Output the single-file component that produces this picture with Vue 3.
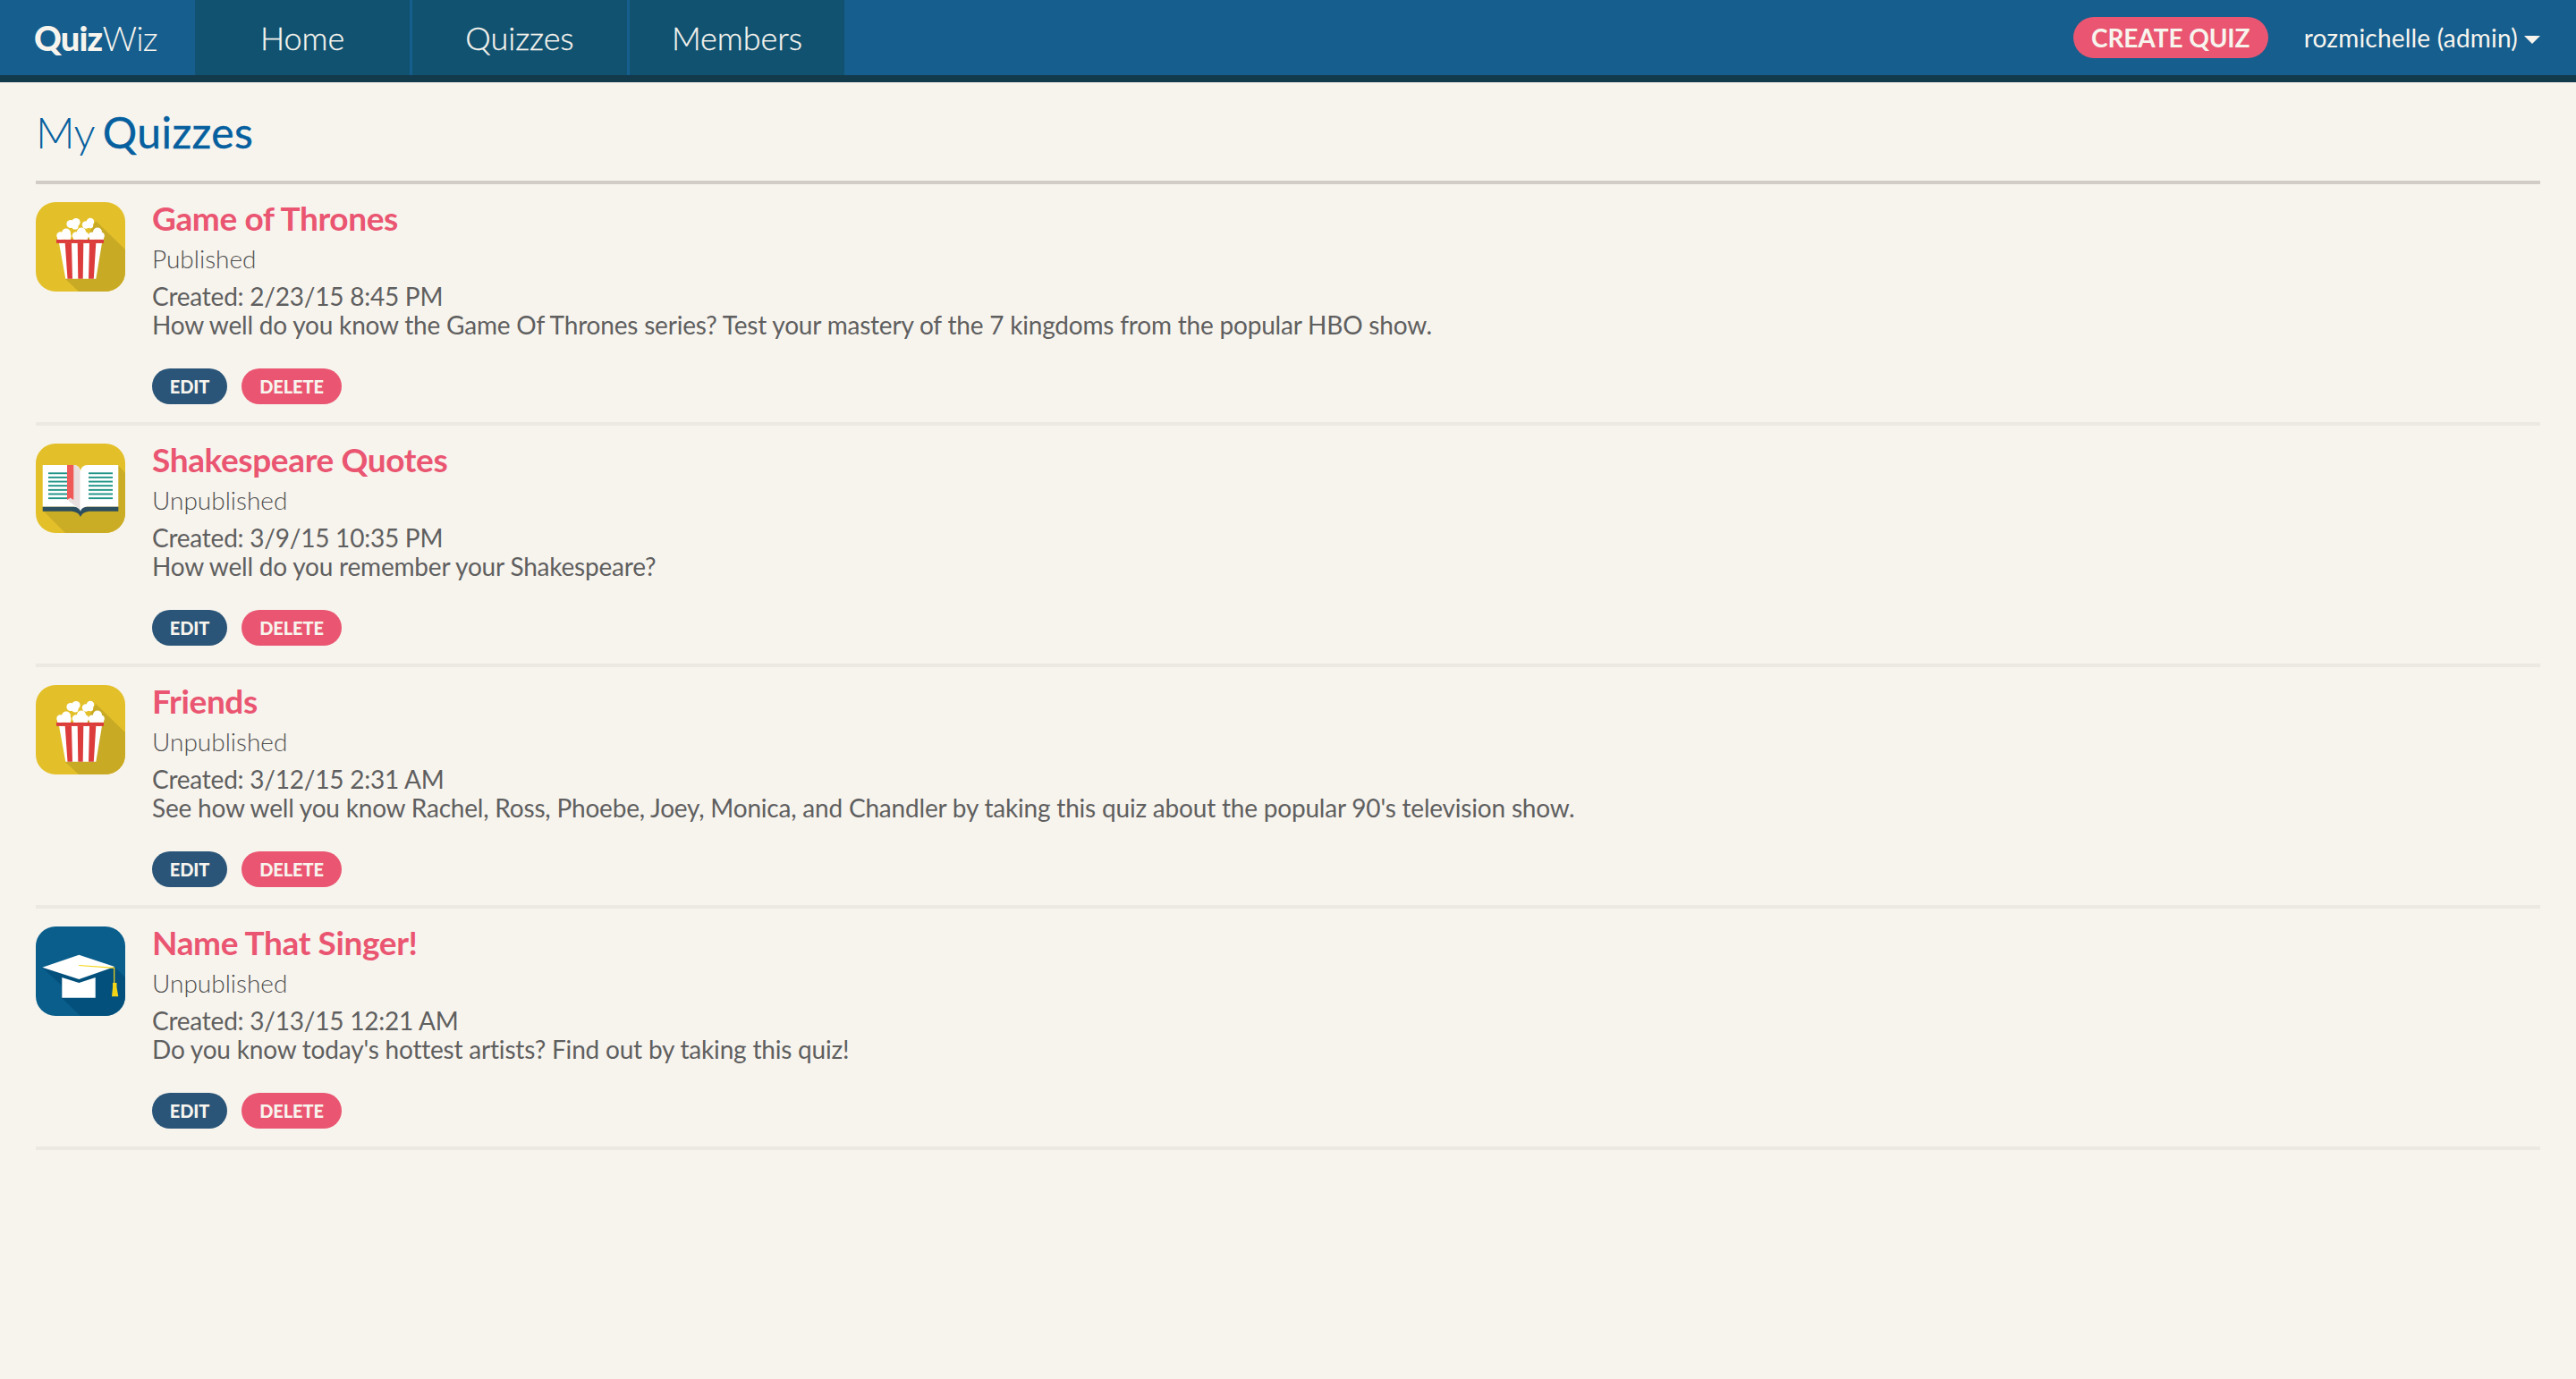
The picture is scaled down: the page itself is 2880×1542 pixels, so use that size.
<script setup>
const quizzes = [
  { title: 'Game of Thrones', status: 'Published', created: '2/23/15 8:45 PM', desc: 'How well do you know the Game Of Thrones series? Test your mastery of the 7 kingdoms from the popular HBO show.', icon: 'popcorn' },
  { title: 'Shakespeare Quotes', status: 'Unpublished', created: '3/9/15 10:35 PM', desc: 'How well do you remember your Shakespeare?', icon: 'book' },
  { title: 'Friends', status: 'Unpublished', created: '3/12/15 2:31 AM', desc: "See how well you know Rachel, Ross, Phoebe, Joey, Monica, and Chandler by taking this quiz about the popular 90's television show.", icon: 'popcorn' },
  { title: 'Name That Singer!', status: 'Unpublished', created: '3/13/15 12:21 AM', desc: "Do you know today's hottest artists? Find out by taking this quiz!", icon: 'cap' }
]
const bookLines = [32.3, 36.9, 41.6, 46.2, 50.9, 55.5, 60.2]
</script>

<template>
  <div class="page">
    <header class="nav">
      <div class="brand"><b>Quiz</b>Wiz</div>
      <nav class="links">
        <a class="link">Home</a>
        <a class="link">Quizzes</a>
        <a class="link">Members</a>
      </nav>
      <div class="right">
        <a class="create">CREATE QUIZ</a>
        <span class="user">rozmichelle (admin)</span>
        <span class="caret"></span>
      </div>
    </header>
    <main class="main">
      <h1 class="heading"><span class="my">My</span> <span class="qz">Quizzes</span></h1>
      <article v-for="q in quizzes" :key="q.title" class="row">
        <svg class="icon" viewBox="0 0 100 100">
          <template v-if="q.icon === 'popcorn'">
            <rect width="100" height="100" rx="22" fill="#e3c029" />
            <path d="M67 21L100 53V78A22 22 0 0 1 78 100H48L33 86Z" fill="#c9aa25" />
            <path d="M26 45.7H74L67.3 85.7H33.3Z" fill="#fff" />
            <path d="M32.7 45.7H40L41 85.7H35.5ZM46.7 45.7H53.3L52.7 85.7H47.3ZM60 45.7H67.3L64.8 85.7H59Z" fill="#dc3d3c" />
            <rect x="23" y="41.7" width="53" height="4.2" fill="#dc3d3c" />
            <g fill="#fff">
              <circle cx="39" cy="24.5" r="4.6" /><circle cx="45" cy="22.5" r="4.6" /><circle cx="44" cy="27" r="3.6" />
              <circle cx="56" cy="25.5" r="4.2" /><circle cx="61" cy="22" r="4.2" /><circle cx="61" cy="26" r="3.2" />
              <circle cx="27.5" cy="37.5" r="4.2" /><circle cx="34" cy="34.5" r="5" /><circle cx="36" cy="38" r="3.6" />
              <circle cx="45" cy="37.5" r="4.2" /><circle cx="51" cy="33.5" r="5" /><circle cx="55" cy="37.5" r="4.2" />
              <circle cx="63" cy="37.5" r="4" /><circle cx="69" cy="33.5" r="5" /><circle cx="73" cy="37.5" r="3.8" />
              <rect x="24" y="38" width="15" height="3.8" /><rect x="42" y="38" width="16" height="3.8" /><rect x="60" y="38" width="16" height="3.8" />
            </g>
          </template>
          <template v-else-if="q.icon === 'book'">
            <rect width="100" height="100" rx="22" fill="#e3c029" />
            <path d="M92 24L100 33V78A22 22 0 0 1 78 100H33L8 75Z" fill="#cbac25" />
            <path d="M7.7 70.5H92.3V75.7H62C55 75.7 51.5 78 50 82C48.5 78 45 75.7 38 75.7H7.7Z" fill="#2c4e5e" />
            <path d="M7.7 24H42.3C47 24 49.5 27 50 31C50.5 27 53 24 58 24H92.3V70.5H60C54 70.5 51 72 50 76C49 72 46 70.5 40 70.5H7.7Z" fill="#fff" />
            <path d="M42.3 24C47 24 49.5 27 49.5 31V74L36.5 64V24Z" fill="#e9dfdf" />
            <path d="M35 24H42.3V63L38.6 60.8L35 63Z" fill="#ef5a59" />
            <g fill="#1f9487">
              <rect v-for="y in bookLines" :key="'l' + y" x="14" :y="y" width="21" height="1.9" />
              <rect v-for="y in bookLines" :key="'r' + y" x="59" :y="y" width="27" height="1.9" />
            </g>
          </template>
          <template v-else>
            <rect width="100" height="100" rx="22" fill="#095e8c" />
            <path d="M7.3 46L29 66V80L50 100H78A22 22 0 0 0 100 78V57L88 45Z" fill="#03507c" />
            <path d="M29.3 57L48.3 63L66.7 57V79.7H29.3Z" fill="#fff" />
            <path d="M7.3 45.7L48.3 31.7L88.3 45L48.3 59Z" fill="#fff" />
            <path d="M48.3 43.5L87.7 46.3V64" fill="none" stroke="#f3d416" stroke-width="1.2" />
            <path d="M86 63H90.5V68L92.3 78.3H85L86 68Z" fill="#f3d416" />
          </template>
        </svg>
        <div class="info">
          <h2 class="title">{{ q.title }}</h2>
          <div class="status">{{ q.status }}</div>
          <div class="created">Created: {{ q.created }}</div>
          <div class="desc">{{ q.desc }}</div>
          <div class="actions">
            <a class="btn edit">EDIT</a>
            <a class="btn del">DELETE</a>
          </div>
        </div>
      </article>
    </main>
  </div>
</template>

<style scoped>
.page { min-height: 1542px; background: #f7f4ee; font-family: Lato, "Liberation Sans", sans-serif; color: #5f5f5f; }
.nav { display: flex; align-items: stretch; height: 84px; background: #165e8d; border-bottom: 8px solid #123a4b; color: #f7f4ee; }
.brand { width: 218px; box-sizing: border-box; padding-left: 38px; font-size: 38px; line-height: 84px; font-weight: 300; letter-spacing: -0.8px; }
.brand b { font-weight: 900; }
.links { display: flex; gap: 3px; }
.link { width: 240px; text-align: center; font-size: 36px; font-weight: 300; line-height: 84px; background: #105270; letter-spacing: -0.05px; -webkit-text-stroke: 0.3px #f7f4ee; }
.right { margin-left: auto; display: flex; align-items: center; padding-right: 40px; }
.create { width: 218px; height: 46px; line-height: 47px; text-align: center; border-radius: 23px; background: #ea5671; font-size: 28px; font-weight: 700; letter-spacing: -0.1px; }
.user { margin-left: 40px; font-size: 28px; letter-spacing: 0.2px; }
.caret { margin-left: 7px; margin-top: 4px; width: 0; height: 0; border-left: 9px solid transparent; border-right: 9px solid transparent; border-top: 9px solid #f7f4ee; }
.main { padding: 0 40px; }
.heading { margin: 0; height: 114px; box-sizing: border-box; border-bottom: 4px solid #d1ccc5; font-size: 48px; line-height: 62px; padding-top: 25px; font-weight: 400; color: #065f9e; letter-spacing: -0.5px; }
.my { font-weight: 300; }
.qz { margin-left: -3px; letter-spacing: 0.4px; -webkit-text-stroke: 0.4px #065f9e; }
.row { display: flex; gap: 30px; padding-top: 20px; height: 246px; border-bottom: 4px solid #ece9e3; }
.icon { width: 100px; height: 100px; flex: none; }
.info { flex: 1; min-width: 0; }
.title { margin: -4px 0 0; font-size: 37px; line-height: 44px; font-weight: 700; color: #ea5671; letter-spacing: -0.38px; }
.status { margin-top: 3px; font-size: 28px; line-height: 40px; font-weight: 300; color: #4f4f4f; }
.created { margin-top: 6px; font-size: 28px; line-height: 32px; letter-spacing: -0.23px; }
.desc { font-size: 28px; line-height: 33px; letter-spacing: -0.2px; }
.actions { display: flex; gap: 16px; margin-top: 32px; }
.btn { height: 40px; line-height: 41px; text-align: center; border-radius: 20px; color: #f7f4ee; font-size: 20px; font-weight: 900; letter-spacing: -0.1px; }
.edit { width: 84px; background: #2a5578; }
.del { width: 112px; background: #ea5671; }
</style>
<style>
html, body { margin: 0; background: #f7f4ee; }
</style>
